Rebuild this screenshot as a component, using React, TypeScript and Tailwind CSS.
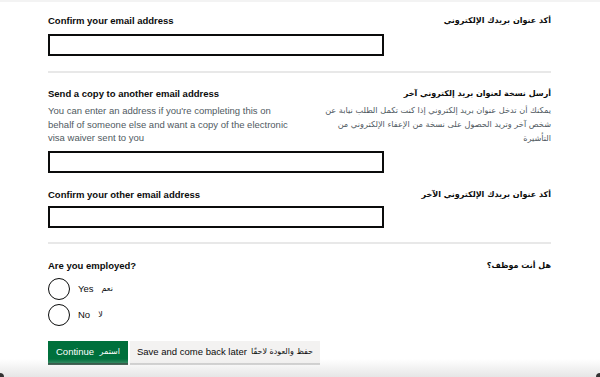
import React from "react";

const en = { fontFamily: '"Liberation Sans", Arial, sans-serif' };
const ar = { fontFamily: '"DejaVu Sans", "Noto Sans", sans-serif' };

function Row({
  enLabel,
  arLabel,
  enHint,
  arHint,
}: {
  enLabel: string;
  arLabel: string;
  enHint?: string;
  arHint?: string;
}) {
  return (
    <div className="flex justify-between">
      <div className="w-[250px]">
        <div className="text-[9.5px] font-bold text-[#0b0c0c] leading-[13px]" style={en}>
          {enLabel}
        </div>
        {enHint && (
          <div className="mt-[4px] text-[9.5px] text-[#505a5f] leading-[13.5px]" style={en}>
            {enHint}
          </div>
        )}
      </div>
      <div dir="rtl" className="w-[230px] text-right">
        <div className="text-[8px] font-bold text-[#0b0c0c] leading-[13px]" style={ar}>
          {arLabel}
        </div>
        {arHint && (
          <div className="mt-[3px] text-[8.2px] text-[#505a5f] leading-[14px]" style={ar}>
            {arHint}
          </div>
        )}
      </div>
    </div>
  );
}

function Input() {
  return <div className="h-[22px] w-[336px] border-2 border-[#0b0c0c] bg-white" />;
}

function Radio({ enL, arL }: { enL: string; arL: string }) {
  return (
    <div className="flex items-center h-[22px]">
      <div className="w-[22px] h-[22px] rounded-full border-[1.5px] border-[#0b0c0c]" />
      <span className="ml-[8px] text-[9.5px] text-[#0b0c0c]" style={en}>
        {enL}
      </span>
      <span className="ml-[8px] text-[8px] text-[#0b0c0c]" style={ar} dir="rtl">
        {arL}
      </span>
    </div>
  );
}

export default function App() {
  return (
    <div className="relative w-[600px] h-[377px] overflow-hidden bg-white">
      <div className="h-[2px] bg-[#f3f3f3]" />
      <div className="pl-[48px] pr-[49px] pt-[12px]">
        <Row enLabel="Confirm your email address" arLabel="أكد عنوان بريدك الإلكتروني" />
        <div className="mt-[7px]">
          <Input />
        </div>
        <div className="mt-[15px] h-[2px] bg-[#e8e8e8]" />
        <div className="mt-[14px]">
          <Row
            enLabel="Send a copy to another email address"
            arLabel="أرسل نسخة لعنوان بريد إلكتروني آخر"
            enHint="You can enter an address if you're completing this on behalf of someone else and want a copy of the electronic visa waiver sent to you"
            arHint="يمكنك أن تدخل عنوان بريد إلكتروني إذا كنت تكمل الطلب نيابة عن شخص آخر وتريد الحصول على نسخة من الإعفاء الإلكتروني من التأشيرة"
          />
        </div>
        <div className="mt-[6px]">
          <Input />
        </div>
        <div className="mt-[15px]">
          <Row enLabel="Confirm your other email address" arLabel="أكد عنوان بريدك الإلكتروني الآخر" />
        </div>
        <div className="mt-[5px]">
          <Input />
        </div>
        <div className="mt-[14px] h-[2px] bg-[#e8e8e8]" />
        <div className="mt-[15px]">
          <Row enLabel="Are you employed?" arLabel="هل أنت موظف؟" />
        </div>
        <div className="mt-[6px] flex flex-col gap-[4px]">
          <Radio enL="Yes" arL="نعم" />
          <Radio enL="No" arL="لا" />
        </div>
        <div className="mt-[15px] flex gap-[2px]">
          <div className="h-[22px] w-[80px] bg-[#00703c] shadow-[0_2px_0_#002d18] flex items-center justify-between px-[8px] text-white">
            <span className="text-[9.5px]" style={en}>Continue</span>
            <span className="text-[8px]" style={ar}>استمر</span>
          </div>
          <div className="h-[22px] w-[190px] bg-[#f3f2f1] shadow-[0_2px_0_#c8c8c8] flex items-center justify-between px-[7px] text-[#0b0c0c]">
            <span className="text-[9.5px]" style={en}>Save and come back later</span>
            <span className="text-[8px]" style={ar}>حفظ والعودة لاحقًا</span>
          </div>
        </div>
      </div>
      <div className="absolute left-0 right-0 bottom-0 h-[18px] bg-gradient-to-b from-white/0 to-[#e6e6e6]" />
      <div className="absolute left-0 bottom-0 w-[4px] h-[4px] rounded-tr-full bg-[#333]" />
      <div className="absolute right-0 bottom-0 w-[4px] h-[4px] rounded-tl-full bg-[#333]" />
    </div>
  );
}
